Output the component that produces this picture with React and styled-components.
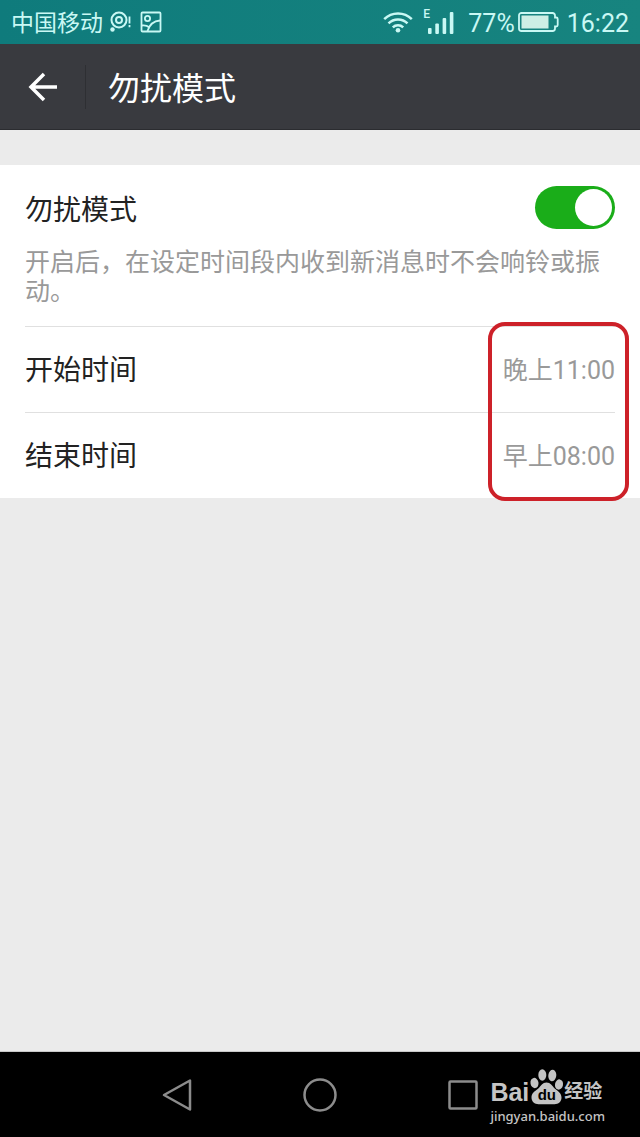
import React, { useState } from 'react';
import styled, { createGlobalStyle } from 'styled-components';

const GlobalStyle = createGlobalStyle`
  * {
    box-sizing: border-box;
  }

  body {
    margin: 0;
    background: #ebebeb;
    font-family: Roboto, 'Noto Sans CJK SC', sans-serif;
  }

  button {
    border: none;
    padding: 0;
    background: none;
    font: inherit;
    cursor: pointer;
  }
`;

const Screen = styled.div`
  display: flex;
  flex-direction: column;
  min-height: 100vh;
`;

const StatusBar = styled.div`
  display: flex;
  align-items: center;
  justify-content: space-between;
  height: 44px;
  padding: 0 11px;
  background: linear-gradient(90deg, #0f7b7c, #17847f);
  color: #c9f8f4;
  font-size: 25px;
  line-height: 28px;
`;

const StatusGroup = styled.div`
  display: flex;
  align-items: center;
  gap: ${(props) => props.$gap}px;
`;

const StatusText = styled.span`
  padding-top: 3px;
`;

const Carrier = styled(StatusText)`
  font-size: 23px;
`;

const Signal = styled.div`
  position: relative;
  display: flex;
  margin: 0 6px 0 2px;
`;

const NetworkType = styled.span`
  position: absolute;
  top: 0;
  left: 0;
  font-size: 12px;
  font-weight: 500;
  line-height: 10px;
`;

const Header = styled.header`
  display: flex;
  align-items: center;
  height: 86px;
  background: #393a3f;
  color: #fff;
  border-bottom: 1px solid #2b2c30;
`;

const BackButton = styled.button`
  display: flex;
  align-items: center;
  justify-content: center;
  width: 86px;
  height: 44px;
  border-right: 1px solid #2e2f33;
  color: #fff;
`;

const Title = styled.h1`
  margin: 0;
  padding: 4px 0 0 22px;
  font-size: 32px;
  font-weight: 400;
  line-height: 40px;
`;

const Content = styled.main`
  flex: 1;
  padding-top: 35px;
`;

const Card = styled.section`
  padding: 0 25px;
  background: #fff;
`;

const SwitchRow = styled.div`
  display: flex;
  align-items: center;
  justify-content: space-between;
  height: 83px;
  padding-top: 2px;
`;

const Label = styled.label`
  padding-top: 6px;
  color: #222;
  font-size: 28px;
  line-height: 36px;
`;

const Switch = styled.input`
  appearance: none;
  display: flex;
  align-items: center;
  justify-content: flex-end;
  width: 80px;
  height: 43px;
  margin: 0;
  padding: 3px;
  border-radius: 22px;
  background: #1aad19;
  cursor: pointer;

  &::before {
    content: '';
    width: 37px;
    height: 37px;
    border-radius: 50%;
    background: #fff;
  }

  &:not(:checked) {
    justify-content: flex-start;
    background: #ccc;
  }
`;

const Description = styled.p`
  margin: 0;
  padding-bottom: 20px;
  color: #999;
  font-size: 25px;
  line-height: 29px;
`;

const TimeRows = styled.div`
  position: relative;
`;

const TimeRow = styled.button`
  display: flex;
  align-items: center;
  justify-content: space-between;
  width: 100%;
  height: 86px;
  padding-top: 2px;
  border-top: 1px solid #e0e0e0;
  color: #222;
  font-size: 28px;
  line-height: 36px;
`;

const TimeValue = styled.span`
  color: #999;
  font-size: 25px;
`;

const Highlight = styled.div`
  position: absolute;
  top: -4px;
  right: -14px;
  bottom: -3px;
  width: 141px;
  border: 4px solid #cd2129;
  border-radius: 17px;
  pointer-events: none;
`;

const NavBar = styled.nav`
  position: relative;
  height: 86px;
  border-top: 1px solid #c8c8c8;
  background: #000;
`;

const NavButtons = styled.div`
  display: grid;
  grid-template-columns: repeat(3, 1fr);
  width: 67%;
  height: 100%;
  margin: 0 auto;
`;

const NavButton = styled.button`
  display: flex;
  align-items: center;
  justify-content: center;
`;

const Watermark = styled.div`
  position: absolute;
  right: 35px;
  bottom: 12px;
  color: #c4c4c4;
`;

const Brand = styled.div`
  display: flex;
  align-items: flex-end;
  height: 37px;
  margin-bottom: 2px;
`;

const BrandLatin = styled.span`
  font-family: 'Liberation Sans', sans-serif;
  font-size: 25px;
  font-weight: 700;
  line-height: 26px;
`;

const BrandChinese = styled.span`
  font-size: 19px;
  font-weight: 700;
  line-height: 26px;
`;

const Paw = styled.div`
  position: relative;
  display: flex;
`;

const PawText = styled.span`
  position: absolute;
  left: 0;
  right: 0;
  bottom: 2px;
  color: #000;
  font-family: 'Liberation Sans', sans-serif;
  font-size: 15px;
  font-weight: 700;
  line-height: 16px;
  text-align: center;
`;

const Site = styled.div`
  font-family: 'Noto Sans', sans-serif;
  font-size: 13px;
  font-weight: 500;
  line-height: 18px;
`;

const times = [
  { id: 'start', label: '开始时间', value: '晚上11:00' },
  { id: 'end', label: '结束时间', value: '早上08:00' },
];

function SearchIcon() {
  return (
    <svg width="23" height="22" viewBox="0 0 23 22" fill="none" stroke="currentColor" strokeWidth="2">
      <circle cx="9" cy="9" r="7.500" />
      <circle cx="9" cy="9" r="3" />
      <circle cx="2.500" cy="18.500" r="2.200" fill="currentColor" stroke="none" />
      <path d="M19.500 5.500v7M19.500 14v2.200" strokeWidth="1.800" />
    </svg>
  );
}

function PictureIcon() {
  return (
    <svg width="22" height="22" viewBox="0 0 22 22" fill="none" stroke="currentColor" strokeWidth="1.800">
      <rect x="1.500" y="1.500" width="19" height="19" rx="1" />
      <circle cx="7.500" cy="7.500" r="2.600" />
      <path d="M2 14.500C5 14 7 14.500 9.500 16.500M7.500 20C9.500 13.500 13.500 10 20 9.500" />
    </svg>
  );
}

function WifiIcon() {
  return (
    <svg width="30" height="22" viewBox="0 0 30 22" fill="none" stroke="currentColor" strokeWidth="2.500">
      <path d="M1.200 8.200a19.500 19.500 0 0 1 27.600 0" />
      <path d="M5.500 12.400a13.400 13.400 0 0 1 19 0" />
      <path d="M9.800 16.300a7.400 7.400 0 0 1 10.400 0" />
      <circle cx="15" cy="19.300" r="2.300" fill="currentColor" stroke="none" />
    </svg>
  );
}

function SignalIcon() {
  return (
    <svg width="31" height="26" viewBox="0 0 31 26" fill="currentColor">
      <rect x="5" y="19" width="3.600" height="6" rx="1" />
      <rect x="12.300" y="14.500" width="3.600" height="10.500" rx="1" />
      <rect x="19.600" y="9" width="3.600" height="16" rx="1" />
      <rect x="26.800" y="3" width="3.600" height="22" rx="1" />
    </svg>
  );
}

function BatteryIcon() {
  return (
    <svg width="41" height="20" viewBox="0 0 41 20" fill="none" stroke="currentColor" strokeWidth="1.800">
      <path d="M3.500 1h31a2.500 2.500 0 0 1 2.500 2.500V5.500h1.200a1.500 1.500 0 0 1 1.500 1.500v6a1.500 1.500 0 0 1-1.500 1.500H37v2a2.500 2.500 0 0 1-2.500 2.500h-31A2.500 2.500 0 0 1 1 16.500v-13A2.500 2.500 0 0 1 3.500 1z" />
      <rect x="3.500" y="3.500" width="27" height="13" fill="#cdeee5" stroke="none" />
    </svg>
  );
}

function PawIcon() {
  return (
    <svg width="35" height="37" viewBox="0 0 34 37" fill="currentColor">
      <ellipse cx="5" cy="15" rx="4" ry="5.200" transform="rotate(-10 5 15)" />
      <ellipse cx="12.800" cy="7" rx="4" ry="5.700" />
      <ellipse cx="22.800" cy="7.500" rx="4" ry="5.700" transform="rotate(8 22.800 7.500)" />
      <ellipse cx="29.500" cy="16.500" rx="4" ry="5.200" transform="rotate(10 29.500 16.500)" />
      <path d="M17 14.500c-4 0-5.500 3.500-8.500 6.200C5 23.500 2 25 2 29.500c0 4.200 3.200 6.700 7 6.700h16c4 0 7-2.500 7-6.700 0-4-2.800-5.800-6.500-8.800-3-2.700-4.500-6.200-8.500-6.200z" />
    </svg>
  );
}

export default function App() {
  const [enabled, setEnabled] = useState(true);

  return (
    <Screen>
      <GlobalStyle />
      <StatusBar>
        <StatusGroup $gap={7}>
          <Carrier>中国移动</Carrier>
          <SearchIcon />
          <PictureIcon />
        </StatusGroup>
        <StatusGroup $gap={8}>
          <WifiIcon />
          <Signal>
            <NetworkType>E</NetworkType>
            <SignalIcon />
          </Signal>
          <StatusGroup $gap={3}>
            <StatusText>77%</StatusText>
            <BatteryIcon />
          </StatusGroup>
          <StatusText>16:22</StatusText>
        </StatusGroup>
      </StatusBar>

      <Header>
        <BackButton type="button" aria-label="返回">
          <svg width="30" height="30" viewBox="0 0 30 30" fill="none" stroke="currentColor" strokeWidth="3.500">
            <path d="M16 2L3 15l13 13M3 15h26" />
          </svg>
        </BackButton>
        <Title>勿扰模式</Title>
      </Header>

      <Content>
        <Card>
          <SwitchRow>
            <Label htmlFor="dnd">勿扰模式</Label>
            <Switch
              id="dnd"
              type="checkbox"
              checked={enabled}
              onChange={(e) => setEnabled(e.target.checked)}
            />
          </SwitchRow>
          <Description>开启后，在设定时间段内收到新消息时不会响铃或振动。</Description>
          <TimeRows>
            {times.map((time) => (
              <TimeRow key={time.id} type="button">
                <span>{time.label}</span>
                <TimeValue>{time.value}</TimeValue>
              </TimeRow>
            ))}
            <Highlight />
          </TimeRows>
        </Card>
      </Content>

      <NavBar>
        <NavButtons>
          <NavButton type="button" aria-label="返回">
            <svg width="34" height="34" viewBox="0 0 34 34" fill="none" stroke="#8c8c8c" strokeWidth="2.500" strokeLinejoin="round">
              <path d="M30 2.500v29L4 17z" />
            </svg>
          </NavButton>
          <NavButton type="button" aria-label="主屏幕">
            <svg width="34" height="34" viewBox="0 0 34 34" fill="none" stroke="#8c8c8c" strokeWidth="2.500">
              <circle cx="17" cy="17" r="15.500" />
            </svg>
          </NavButton>
          <NavButton type="button" aria-label="最近任务">
            <svg width="34" height="34" viewBox="0 0 34 34" fill="none" stroke="#8c8c8c" strokeWidth="2.500">
              <rect x="3.500" y="3.500" width="27" height="27" rx="1" />
            </svg>
          </NavButton>
        </NavButtons>
        <Watermark>
          <Brand>
            <BrandLatin>Bai</BrandLatin>
            <Paw>
              <PawIcon />
              <PawText>du</PawText>
            </Paw>
            <BrandChinese>经验</BrandChinese>
          </Brand>
          <Site>jingyan.baidu.com</Site>
        </Watermark>
      </NavBar>
    </Screen>
  );
}
